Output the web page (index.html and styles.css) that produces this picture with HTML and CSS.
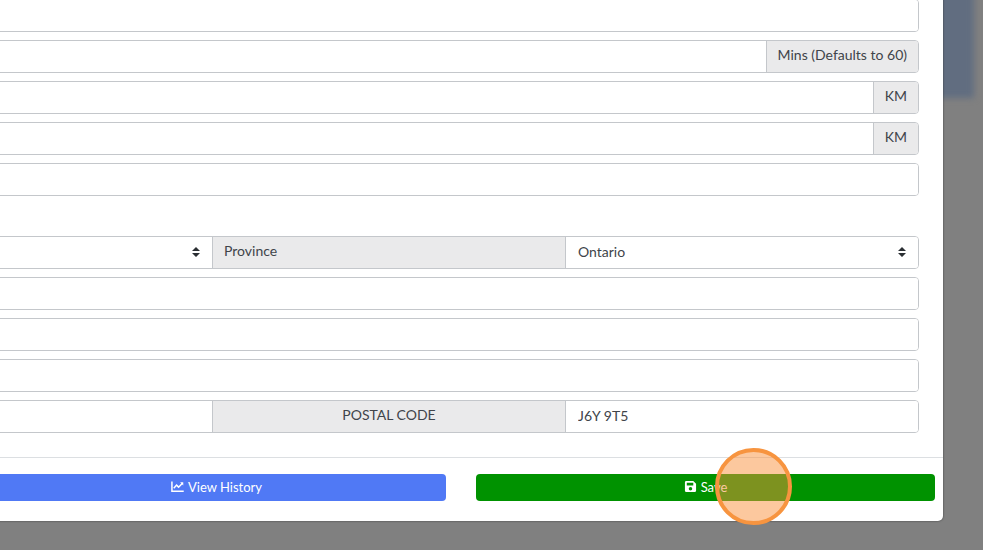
FILE: index.html
```html
<!DOCTYPE html>
<html lang="en">
<head>
  <meta charset="UTF-8">
  <meta name="viewport" content="width=device-width, initial-scale=1">
  <title>Edit location</title>
  <link rel="stylesheet" href="styles.css">
</head>
<body>
  <div class="page-behind"></div>

  <form class="modal">
    <div class="modal-body">
      <div class="input-group">
        <input type="text" aria-label="Name">
      </div>
      <div class="input-group">
        <input type="text" id="duration">
        <label class="addon" for="duration">Mins (Defaults to 60)</label>
      </div>
      <div class="input-group">
        <input type="text" id="distance">
        <label class="addon" for="distance">KM</label>
      </div>
      <div class="input-group">
        <input type="text" id="radius">
        <label class="addon" for="radius">KM</label>
      </div>
      <div class="input-group">
        <input type="text" aria-label="Notes">
      </div>

      <div class="input-group columns address-start">
        <div class="select-wrap">
          <select aria-label="Country"><option></option></select>
          <svg class="arrows" viewBox="0 0 8 10"><path d="M4 0 8 4H0zM0 6h8l-4 4z"/></svg>
        </div>
        <label class="addon" for="province">Province</label>
        <div class="select-wrap">
          <select id="province"><option>Ontario</option></select>
          <svg class="arrows" viewBox="0 0 8 10"><path d="M4 0 8 4H0zM0 6h8l-4 4z"/></svg>
        </div>
      </div>
      <div class="input-group">
        <input type="text" aria-label="City">
      </div>
      <div class="input-group">
        <input type="text" aria-label="Address line 1">
      </div>
      <div class="input-group">
        <input type="text" aria-label="Address line 2">
      </div>
      <div class="input-group columns">
        <input type="text" aria-label="Unit">
        <label class="addon centered" for="postal">POSTAL CODE</label>
        <input type="text" id="postal" value="J6Y 9T5">
      </div>
    </div>

    <div class="modal-footer">
      <button type="button" class="btn btn-history">
        <svg class="icon" viewBox="0 0 14 14"><path d="M1 1.500V12.200H13.700M3 9 6 5.500 8.200 7.700 12.300 3.500" fill="none" stroke="currentColor" stroke-width="1.600"/><path d="M9.800 2.500h3.400v3.400z" fill="currentColor"/></svg>
        View History
      </button>
      <div class="save-wrap">
        <button type="submit" class="btn btn-save">
          <svg class="icon" viewBox="0 0 14 14"><path fill="currentColor" fill-rule="evenodd" d="M2.500 1H10l3 3v7.500a1.500 1.500 0 0 1-1.500 1.500h-9A1.500 1.500 0 0 1 1 11.500v-9A1.500 1.500 0 0 1 2.500 1zM3 3v3h7V3zM7 7.600a1.900 1.900 0 1 0 0 3.800 1.900 1.900 0 0 0 0-3.800z"/></svg>
          Save
        </button>
        <span class="click-marker"></span>
      </div>
    </div>
  </form>
</body>
</html>
```
FILE: styles.css
```css
* {
  box-sizing: border-box;
}

body {
  margin: 0;
  min-height: 100vh;
  overflow: hidden;
  background: #808080;
  font-family: Lato, sans-serif;
  font-size: 14px;
  color: #40444a;
}

/* blurred page showing past the edge of the modal */
.page-behind {
  position: absolute;
  top: -20px;
  right: 9px;
  width: 60px;
  height: 118px;
  background: #616d80;
  filter: blur(3px);
}

/* the modal runs off the left and top of the window */
.modal {
  position: relative;
  margin: -1px 40px 0 -13px;
  background: #fff;
  border-radius: 0 0 5px 5px;
  box-shadow: 0 0 2px #333;
}

.modal-body {
  display: flex;
  flex-direction: column;
  gap: 8px;
  padding: 0 24px 24px 0;
}

.input-group {
  display: flex;
  height: 33px;
  border: 1px solid #c4c7cb;
  border-radius: 4px;
  overflow: hidden;
}

.input-group > * + * {
  border-left: 1px solid #c4c7cb;
}

.columns {
  display: grid;
  grid-template-columns: 224fr 353fr 353fr;
}

.address-start {
  margin-top: 32px;
}

input,
select {
  width: 100%;
  min-width: 0;
  height: 100%;
  padding: 0 12px 3px;
  border: 0;
  background: #fff;
  font: inherit;
  color: inherit;
  appearance: none;
}

.input-group > input {
  flex: 1;
}

.addon {
  padding: 0 11px;
  background: #eaeaeb;
  line-height: 28px;
  white-space: nowrap;
}

.centered {
  text-align: center;
}

.select-wrap {
  position: relative;
}

.arrows {
  position: absolute;
  top: 10px;
  right: 12px;
  width: 8px;
  height: 10px;
  fill: #2b2f33;
}

.modal-footer {
  display: grid;
  grid-template-columns: 1fr 1fr;
  gap: 30px;
  padding: 16px 8px 20px 0;
  border-top: 1px solid #dcdfe2;
}

.btn {
  display: flex;
  align-items: center;
  justify-content: center;
  gap: 4px;
  width: 100%;
  height: 27px;
  padding: 0 8px 2px;
  border: 0;
  border-radius: 4px;
  font: inherit;
  font-size: 13px;
  color: #fff;
}

.btn-history {
  background: #5079f5;
}

.btn-save {
  background: #009200;
}

.icon {
  width: 13px;
  height: 13px;
}

.save-wrap {
  position: relative;
}

.click-marker {
  position: absolute;
  top: -26px;
  left: 52%;
  width: 77px;
  height: 77px;
  border: 4px solid #f7943f;
  border-radius: 50%;
  background: rgba(249, 145, 62, 0.5);
  pointer-events: none;
}
```
